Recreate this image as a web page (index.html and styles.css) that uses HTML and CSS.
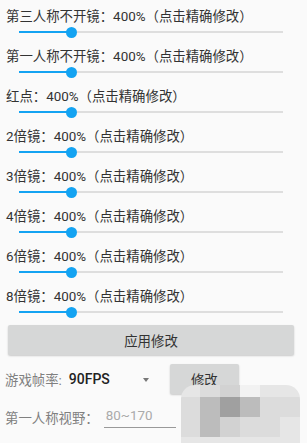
FILE: index.html
```html
<!DOCTYPE html>
<html lang="zh-CN">
<head>
  <meta charset="UTF-8">
  <meta name="viewport" content="width=device-width, initial-scale=1.0">
  <title>画质设置</title>
  <link rel="stylesheet" href="styles.css">
</head>
<body>
  <div class="list">
    <div class="row">
      <div class="label">第三人称不开镜：400%（点击精确修改）</div>
      <div class="slider" style="--v:19.7%"><div class="fill"></div><div class="thumb"></div></div>
    </div>
    <div class="row">
      <div class="label">第一人称不开镜：400%（点击精确修改）</div>
      <div class="slider" style="--v:19.7%"><div class="fill"></div><div class="thumb"></div></div>
    </div>
    <div class="row">
      <div class="label">红点：400%（点击精确修改）</div>
      <div class="slider" style="--v:19.7%"><div class="fill"></div><div class="thumb"></div></div>
    </div>
    <div class="row">
      <div class="label">2倍镜：400%（点击精确修改）</div>
      <div class="slider" style="--v:19.7%"><div class="fill"></div><div class="thumb"></div></div>
    </div>
    <div class="row">
      <div class="label">3倍镜：400%（点击精确修改）</div>
      <div class="slider" style="--v:19.7%"><div class="fill"></div><div class="thumb"></div></div>
    </div>
    <div class="row">
      <div class="label">4倍镜：400%（点击精确修改）</div>
      <div class="slider" style="--v:19.7%"><div class="fill"></div><div class="thumb"></div></div>
    </div>
    <div class="row">
      <div class="label">6倍镜：400%（点击精确修改）</div>
      <div class="slider" style="--v:19.7%"><div class="fill"></div><div class="thumb"></div></div>
    </div>
    <div class="row">
      <div class="label">8倍镜：400%（点击精确修改）</div>
      <div class="slider" style="--v:19.7%"><div class="fill"></div><div class="thumb"></div></div>
    </div>
  </div>

  <button class="apply">应用修改</button>

  <div class="fps-row">
    <span class="hint-label">游戏帧率:</span>
    <span class="spinner">90FPS</span>
    <span class="arrow"></span>
    <button class="small-btn">修改</button>
  </div>

  <div class="fov-row">
    <span class="hint-label">第一人称视野：</span>
    <span class="field">80~170</span>
  </div>

  <div class="mosaic">
    <i class="s2"></i><i class="s3"></i><i class="s4"></i><i class="s1"></i><i class="s2"></i><i class="s2"></i>
    <i class="s3"></i><i class="s5"></i><i class="s6"></i><i class="s5"></i><i class="s3"></i><i class="s3"></i>
    <i class="s3"></i><i class="s5"></i><i class="s4"></i><i class="s3"></i><i class="s3"></i><i class="s2"></i>
    <i class="s2"></i><i class="s2"></i><i class="s2"></i><i class="s2"></i><i class="s2"></i><i class="s2"></i>
  </div>
</body>
</html>
```

FILE: styles.css
```css
body {
  margin: 0;
  height: 443px;
  overflow: hidden;
  position: relative;
  background-color: #fafafa;
  font-family: Roboto, "Noto Sans CJK SC", sans-serif;
  color: #333;
}
.row {
  height: 40px;
  padding: 7px 0 0 6px;
  box-sizing: border-box;
}
.label {
  font-size: 13.4px;
  line-height: 19px;
  white-space: nowrap;
}
.slider {
  position: relative;
  height: 2px;
  margin: 5px 24px 0 13px;
  background-color: #dedede;
}
.fill {
  width: var(--v);
  height: 100%;
  background-color: #14a3f2;
}
.thumb {
  position: absolute;
  left: var(--v);
  top: 50%;
  width: 11px;
  height: 11px;
  margin: -5.5px 0 0 -5.5px;
  border-radius: 50%;
  background-color: #14a3f2;
}
.apply {
  display: block;
  width: 286px;
  height: 30px;
  margin: 5px 0 0 8px;
  border: none;
  border-radius: 2px;
  background-color: #d6d7d7;
  box-shadow: 0 1px 2px rgba(0, 0, 0, 0.2);
  font-family: inherit;
  font-size: 13.4px;
  color: #333;
  padding: 0;
}
.fps-row {
  display: flex;
  align-items: center;
  height: 30px;
  margin-top: 9px;
  padding-left: 5px;
}
.hint-label {
  font-size: 13.4px;
  color: #808080;
  white-space: nowrap;
}
.spinner {
  margin-left: 7px;
  font-size: 14px;
  font-weight: 500;
  color: #222;
}
.arrow {
  width: 0;
  height: 0;
  margin: 2px 0 0 33px;
  border-left: 3.5px solid transparent;
  border-right: 3.5px solid transparent;
  border-top: 4px solid #777;
}
.small-btn {
  width: 69px;
  height: 30px;
  margin-left: 21px;
  padding: 0;
  border: none;
  border-radius: 2px;
  background-color: #d6d7d7;
  box-shadow: 0 1px 2px rgba(0, 0, 0, 0.2);
  font-family: inherit;
  font-size: 13.4px;
  color: #333;
}
.fov-row {
  display: flex;
  align-items: center;
  margin-top: 11px;
  padding-left: 5px;
}
.field {
  width: 70px;
  height: 22px;
  line-height: 22px;
  margin-left: 5px;
  padding-left: 2px;
  border-bottom: 1px solid #999;
  font-size: 13.4px;
  color: #aaa;
}
.mosaic {
  position: absolute;
  left: 181px;
  top: 385px;
  display: grid;
  grid-template-columns: 19px repeat(5, 20px);
  grid-template-rows: 12px 20px 20px 20px;
  border-radius: 14px;
  overflow: hidden;
}
.mosaic i {
  display: block;
}
.s1 { background-color: #f2f2f2; }
.s2 { background-color: #e6e6e6; }
.s3 { background-color: #dcdcdc; }
.s4 { background-color: #d2d2d2; }
.s5 { background-color: #bcbcbc; }
.s6 { background-color: #a0a0a0; }
```
